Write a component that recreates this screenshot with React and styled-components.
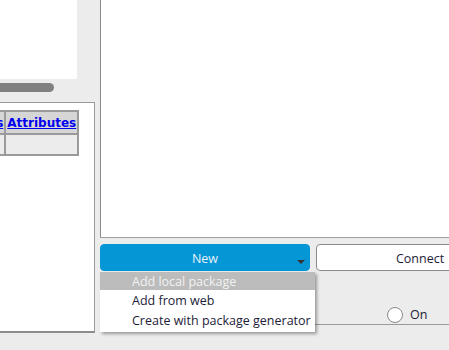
import React from "react";
import styled, { createGlobalStyle } from "styled-components";

const GlobalStyle = createGlobalStyle`
  html, body {
    margin: 0;
    padding: 0;
    background: #ececec;
    font-family: "Open Sans", "DejaVu Sans", sans-serif;
  }
`;

const Window = styled.div`
  display: flex;
  width: 449px;
  height: 350px;
  overflow: hidden;
  background: #ececec;
`;

const LeftCol = styled.div`
  display: flex;
  flex-direction: column;
  width: 95px;
  flex-shrink: 0;
`;

const ScrollPane = styled.div`
  height: 102px;
  display: flex;
  flex-direction: column;
`;

const Canvas = styled.div`
  width: 77px;
  height: 79px;
  background: #ffffff;
`;

const HScroll = styled.div`
  padding-top: 4px;
`;

const Thumb = styled.div`
  width: 54px;
  height: 9px;
  background: #808080;
  border-radius: 0 5px 5px 0;
`;

const PropsBox = styled.div`
  height: 221px;
  background: #ffffff;
  border: 1px solid #9a9a9a;
  border-left: none;
  border-bottom: 2px solid #8c8c8c;
  padding-top: 7px;
  overflow: hidden;
`;

const Table = styled.table`
  border-collapse: collapse;
  margin-left: -40px;
  font-family: "DejaVu Sans", sans-serif;
  font-size: 12px;
`;

const Th = styled.th`
  background: #d6d6d6;
  border: 2px solid #9a9a9a;
  padding: 2px 1px 2px 1px;
  height: 17px;
  text-align: left;
  font-weight: bold;

  a {
    color: #0000ee;
    text-decoration: underline;
  }
`;

const Td = styled.td`
  background: #ececec;
  border: 2px solid #9a9a9a;
  height: 17px;
`;

const Spacer = styled.div`
  width: 5px;
  flex-shrink: 0;
`;

const RightCol = styled.div`
  flex: 1;
  display: flex;
  flex-direction: column;
  min-width: 0;
`;

const Board = styled.div`
  height: 237px;
  background: #ffffff;
  border-left: 1px solid #8a8a8a;
  border-bottom: 1px solid #a0a0a0;
`;

const Controls = styled.div`
  height: 80px;
  padding-top: 6px;
  border-bottom: 1px solid #9a9a9a;
  display: flex;
  flex-direction: column;
`;

const ButtonRow = styled.div`
  display: flex;
  gap: 6px;
`;

const ButtonWrap = styled.div`
  position: relative;
  flex-shrink: 0;
`;

const Button = styled.div`
  box-sizing: border-box;
  width: ${(p) => p.$width}px;
  height: 27px;
  padding-top: 1px;
  border-radius: 4px;
  display: flex;
  align-items: center;
  justify-content: center;
  font-size: 12.5px;
  flex-shrink: 0;
  background: ${(p) => (p.$primary ? "#0596d6" : "#ffffff")};
  color: ${(p) => (p.$primary ? "#e8f2fa" : "#1c1c38")};
  border: 1px solid ${(p) => (p.$primary ? "#0596d6" : "#8a8a8a")};
`;

const Caret = styled.div`
  position: absolute;
  right: 5px;
  bottom: 7px;
  width: 0;
  height: 0;
  border-left: 4px solid transparent;
  border-right: 4px solid transparent;
  border-top: 4px solid #333333;
`;

const Menu = styled.div`
  position: absolute;
  top: 28px;
  left: 0;
  width: 215px;
  background: #ffffff;
  box-shadow: 2px 2px 3px rgba(0, 0, 0, 0.35);
  padding-bottom: 2px;
  z-index: 2;
`;

const MenuItem = styled.div`
  height: ${(p) => (p.$active ? 18 : 20)}px;
  line-height: ${(p) => (p.$active ? 19 : 22)}px;
  padding-left: 32px;
  font-size: 12.5px;
  white-space: nowrap;
  background: ${(p) => (p.$active ? "#bcbcbc" : "transparent")};
  color: ${(p) => (p.$active ? "#f2f2f2" : "#1c1c38")};
`;

const RadioRow = styled.div`
  margin-top: auto;
  padding-left: 287px;
  padding-bottom: 1px;
  display: flex;
  align-items: center;
  gap: 7px;
  font-size: 12.5px;
  color: #1c1c38;
`;

const Radio = styled.div`
  box-sizing: border-box;
  width: 16px;
  height: 16px;
  border-radius: 50%;
  border: 1px solid #8a8a8a;
  background: #ffffff;
`;

export default function App() {
  return (
    <>
      <GlobalStyle />
      <Window>
        <LeftCol>
          <ScrollPane>
            <Canvas />
            <HScroll>
              <Thumb />
            </HScroll>
          </ScrollPane>
          <PropsBox>
            <Table>
              <tbody>
                <tr>
                  <Th>
                    <a>Fields</a>
                  </Th>
                  <Th>
                    <a>Attributes</a>
                  </Th>
                </tr>
                <tr>
                  <Td />
                  <Td />
                </tr>
              </tbody>
            </Table>
          </PropsBox>
        </LeftCol>
        <Spacer />
        <RightCol>
          <Board />
          <Controls>
            <ButtonRow>
              <ButtonWrap>
                <Button $primary $width={210}>
                  New
                </Button>
                <Caret />
                <Menu>
                  <MenuItem $active>Add local package</MenuItem>
                  <MenuItem>Add from web</MenuItem>
                  <MenuItem>Create with package generator</MenuItem>
                </Menu>
              </ButtonWrap>
              <Button $width={208}>Connect</Button>
            </ButtonRow>
            <RadioRow>
              <Radio />
              <span>On</span>
            </RadioRow>
          </Controls>
        </RightCol>
      </Window>
    </>
  );
}
